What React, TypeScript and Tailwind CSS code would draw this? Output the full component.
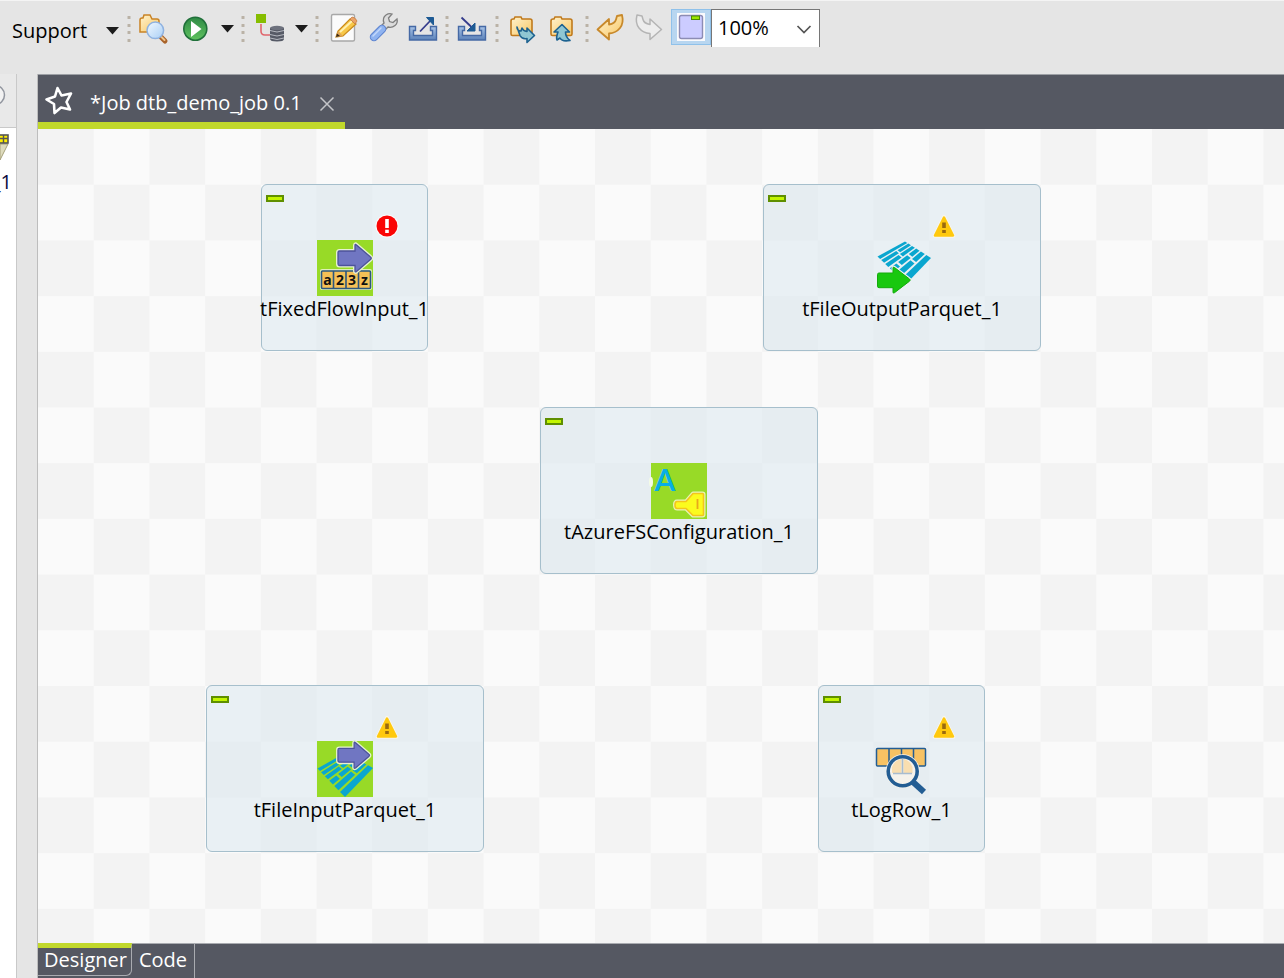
import type { ReactNode } from "react"

type Status = "error" | "warning" | "none"

type JobNode = {
  name: string
  position: string
  status: Status
  icon: ReactNode
}

type Point = [number, number]

function ToolIcon({ children }: { children: ReactNode }) {
  return (
    <svg viewBox="0 0 40 40" className="w-10 h-10" aria-hidden="true">
      {children}
    </svg>
  )
}

function ToolButton({ label, children }: { label: string; children: ReactNode }) {
  return (
    <button type="button" aria-label={label} className="w-10 h-10 shrink-0">
      <ToolIcon>{children}</ToolIcon>
    </button>
  )
}

function MenuButton({ label }: { label: string }) {
  return (
    <button type="button" aria-label={label} className="w-6 h-10 shrink-0">
      <svg viewBox="0 0 24 40" className="w-6 h-10" aria-hidden="true">
        <path d="M7 16h13l-6.500 7.500z" fill="#1c1c1c" />
      </svg>
    </button>
  )
}

function Separator() {
  return (
    <svg viewBox="0 0 8 40" className="w-2 h-10 shrink-0" aria-hidden="true">
      {[7, 15, 22, 30].map((y) => (
        <rect key={y} x="2.500" y={y} width="3" height="3" rx="0.500" fill="#bab2a6" />
      ))}
    </svg>
  )
}

function Folder() {
  return (
    <path
      d="M9 12q0-2 2-2h1l1-2h6l1 2h8q2 0 2 2v13q0 1.500-1.500 1.500h-18q-1.500 0-1.500-1.500z"
      fill="url(#folder)"
      stroke="#c07a1c"
      strokeWidth="1.600"
    />
  )
}

function Gradients() {
  return (
    <svg width="0" height="0" className="absolute" aria-hidden="true">
      <defs>
        <linearGradient id="folder" x1="0" y1="0" x2="1" y2="1">
          <stop offset="0" stopColor="#fff3cf" />
          <stop offset="1" stopColor="#f8c765" />
        </linearGradient>
        <linearGradient id="lens" x1="0" y1="0" x2="1" y2="1">
          <stop offset="0" stopColor="#f2f9ff" />
          <stop offset="1" stopColor="#a9cff6" />
        </linearGradient>
        <linearGradient id="run" x1="0" y1="0" x2="0" y2="1">
          <stop offset="0" stopColor="#2f8a45" />
          <stop offset="1" stopColor="#5fc25f" />
        </linearGradient>
        <linearGradient id="tray" x1="0" y1="0" x2="0" y2="1">
          <stop offset="0" stopColor="#a9c4e6" />
          <stop offset="1" stopColor="#5b82ba" />
        </linearGradient>
      </defs>
    </svg>
  )
}

function Toolbar() {
  return (
    <header className="flex items-start h-[74px] pt-2 shrink-0 border-t border-[#f4f4f4] bg-[#e5e5e5]">
      <button type="button" className="flex items-center justify-between w-[125px] h-11 pl-3 pr-1.5 shrink-0 text-xl text-black">
        Support
        <svg viewBox="0 0 13 8" className="w-[13px] h-2" aria-hidden="true">
          <path d="M0 0h13l-6.500 7.500z" fill="#1c1c1c" />
        </svg>
      </button>
      <Separator />

      <div className="flex px-px">
        <ToolButton label="Search">
          <path d="M6 11q0-2 2-2h1l1-3h6l2 4h5q2 0 2 2v11h-19z" fill="url(#folder)" stroke="#c98325" strokeWidth="1.500" />
          <path d="M27 28l4 4" stroke="#a9632a" strokeWidth="5" strokeLinecap="round" />
          <path d="M27.500 28l3 3" stroke="#f0c38a" strokeWidth="2" strokeLinecap="round" />
          <circle cx="21.300" cy="21.300" r="8.300" fill="url(#lens)" stroke="#8fb2e0" strokeWidth="1.500" />
        </ToolButton>
        <ToolButton label="Run">
          <circle cx="21.300" cy="19.700" r="11.500" fill="url(#run)" stroke="#20703a" strokeWidth="1.600" />
          <path d="M17 12l10.500 8L17 28z" fill="#fff" />
        </ToolButton>
        <MenuButton label="Run menu" />
      </div>
      <Separator />

      <div className="flex px-px">
        <ToolButton label="Metadata">
          <path d="M13 15v7q0 4 4 4h6" fill="none" stroke="#e0666c" strokeWidth="1.600" />
          <rect x="8" y="5" width="10" height="9" fill="#86bd00" />
          <path d="M22 19v11q0 2.500 7 2.500t7-2.500V19z" fill="#565a66" />
          <ellipse cx="29" cy="19" rx="7" ry="2.200" fill="#6d717d" />
          <path d="M22 21.500q7 3 14 0M22 25.500q7 3 14 0M22 29q7 3 14 0" fill="none" stroke="#b5b8c0" strokeWidth="1" />
        </ToolButton>
        <MenuButton label="Metadata menu" />
      </div>
      <Separator />

      <div className="flex px-px">
        <ToolButton label="Edit">
          <rect x="9.500" y="5.500" width="23" height="26.500" rx="1.500" fill="#fbfbfb" stroke="#a8a8a8" strokeWidth="1.400" />
          <path d="M14 28l2-6 12-12 6 5-13 12z" fill="#f7c748" stroke="#c98a1b" strokeWidth="1.200" />
          <path d="M18 23l12-11" stroke="#fff0b0" strokeWidth="2" />
          <path d="M28 10l2-2q3 0 5 4l-2 3z" fill="#eaa468" stroke="#c77c42" strokeWidth="0.800" />
          <path d="M14 28l2-6 5 5z" fill="#e0a556" />
          <path d="M14 28l1-3.500 3 2.500z" fill="#3a2a18" />
        </ToolButton>
        <ToolButton label="Preferences">
          <path
            d="M18 18l4-4q-2-5 2-8 3-2 6-1l-3.500 4 1 3.500 3.500 1 4-3.500q1 4-2 6.500-3 2.500-7 1.500l-4 4z"
            fill="#dcdcdc"
            stroke="#7f7f7f"
            strokeWidth="1.300"
          />
          <path d="M12 28l8-8" stroke="#5d83cf" strokeWidth="8.500" strokeLinecap="round" />
          <path d="M12 28l8-8" stroke="#8fb3f0" strokeWidth="6.500" strokeLinecap="round" />
          <path d="M11 27l8-8" stroke="#c3d8fb" strokeWidth="1.500" strokeLinecap="round" />
        </ToolButton>
        <ToolButton label="Export items">
          <path d="M7.500 17.500h6v4h-2v5h19v-5h-2v-4h6v13.500h-27z" fill="url(#tray)" stroke="#4569a5" strokeWidth="1.400" />
          <path d="M18 22.500L29 11" stroke="#353c8c" strokeWidth="1.800" />
          <path d="M24.500 8.500h7v7.500z" fill="#1d5a94" stroke="#1d5a94" />
        </ToolButton>
      </div>
      <Separator />

      <div className="flex px-px">
        <ToolButton label="Import items">
          <path d="M6.500 17.500h6v4h-2v5h19v-5h-2v-4h6v13.500h-27z" fill="url(#tray)" stroke="#4569a5" strokeWidth="1.400" />
          <path d="M9.500 8.500L20 18.500" stroke="#353c8c" strokeWidth="1.800" />
          <path d="M23 14v8h-8z" fill="#1d5a94" stroke="#1d5a94" />
        </ToolButton>
      </div>
      <Separator />

      <div className="flex px-px">
        <ToolButton label="Export project">
          <Folder />
          <path
            d="M15 18q0 4 4 4l1-3q1 3 5 3.500V19l7.500 7.500-7.500 7v-4q-5 1-7-3z"
            fill="#8fc6d2"
            stroke="#1d6290"
            strokeWidth="1.600"
            strokeLinejoin="round"
          />
        </ToolButton>
        <ToolButton label="Import project">
          <Folder />
          <path
            d="M20 15.500l7.500 7.500h-4q0 5 4.500 8.500-8 1.500-10-2.500l-3 2q-1-3 1-8h-4z"
            fill="#8fc6d2"
            stroke="#1d6290"
            strokeWidth="1.600"
            strokeLinejoin="round"
          />
        </ToolButton>
      </div>
      <Separator />

      <div className="flex">
        <ToolButton label="Undo">
          <path
            d="M6.500 20.500L18 10v5.500q6-1 7-5l1-3.500 5-1q2 8-2 13-4 5-11 5.500v6z"
            fill="url(#folder)"
            stroke="#c8892b"
            strokeWidth="1.800"
            strokeLinejoin="round"
          />
        </ToolButton>
        <ToolButton label="Redo">
          <path
            d="M30.500 20.500L19 10v5.500q-6-1-7-5L11 7 6 6q-2 8 2 13 4 5 11 5.500v6z"
            fill="#ededed"
            stroke="#b4b4b4"
            strokeWidth="1.500"
            strokeLinejoin="round"
          />
        </ToolButton>
        <button
          type="button"
          aria-label="Show subjobs"
          aria-pressed="true"
          className="flex items-center justify-center w-10 h-9 shrink-0 border border-[#8fc1ea] bg-[#b8d6f0]"
        >
          <svg viewBox="0 0 28 28" className="w-7 h-7" aria-hidden="true">
            <rect width="28" height="28" fill="#fafafd" />
            <rect x="2.500" y="2.500" width="23" height="23" rx="2" fill="#ccccff" stroke="#8c8cb4" strokeWidth="1.400" />
            <rect x="14.500" y="3" width="8" height="3.500" fill="#9be800" stroke="#4e8a00" />
          </svg>
        </button>
        <div className="relative">
          <select
            aria-label="Zoom"
            className="appearance-none block w-[109px] h-[38px] pl-1.5 pb-0.5 rounded-none border border-b-0 border-[#767676] bg-white text-xl text-black"
          >
            <option>100%</option>
          </select>
          <svg viewBox="0 0 16 9" className="absolute right-2 top-4 w-4 h-[9px] pointer-events-none" aria-hidden="true">
            <path d="M1.500 1l6.500 6.500L14.500 1" fill="none" stroke="#555" strokeWidth="1.700" />
          </svg>
        </div>
      </div>
    </header>
  )
}

function SideView() {
  return (
    <aside className="w-[17px] shrink-0 flex flex-col overflow-hidden border-r border-[#c9c9c9] bg-white">
      <div className="h-[54px] shrink-0 flex items-center pb-3 border-b border-[#c9c9c9] bg-[#e9e9e9]">
        <svg viewBox="0 0 8 24" className="w-2 h-6" aria-hidden="true">
          <circle cx="-5" cy="12" r="9.500" fill="#f2f2f2" stroke="#92969f" strokeWidth="1.500" />
        </svg>
      </div>
      <svg viewBox="0 0 12 30" className="w-3 h-[30px] mt-1.5 shrink-0" aria-hidden="true">
        <path d="M0 10h8L0 26z" fill="#dedbbd" stroke="#a5a07a" />
        <rect x="-6" y="1" width="14" height="8" fill="#ffee00" stroke="#555" strokeWidth="1.600" />
        <path d="M-6 4.500H8M3.500 1v8" stroke="#555" strokeWidth="1.400" />
      </svg>
      <span className="mt-1 w-3 flex justify-end text-xl leading-7 text-[#0b0b3c]">_1</span>
    </aside>
  )
}

function FlowArrow() {
  const d = "M22.500 11h15.500V5.500q0-2 1.500-.5l14 12q1.500 1.200 0 2.500l-14 12q-1.500 1-1.500-.5V25.500H22.500q-1.500 0-1.500-1.500V12.500q0-1.500 1.500-1.500z"
  return (
    <>
      <path d={d} fill="#e6f2d0" stroke="#e6f2d0" strokeWidth="4" />
      <path d={d} fill="#7076c2" stroke="#4c529b" strokeWidth="1.300" />
    </>
  )
}

// Rows get deeper towards the front; planks are start/end pairs along the row.
const plankRows: { from: number; to: number; planks: Point[] }[] = [
  { from: 0, to: 0.09, planks: [[0, 1]] },
  { from: 0.13, to: 0.23, planks: [[0, 0.55], [0.6, 1]] },
  { from: 0.27, to: 0.38, planks: [[0, 0.5], [0.55, 1]] },
  { from: 0.43, to: 0.56, planks: [[0, 0.25], [0.32, 0.66], [0.72, 1]] },
  { from: 0.61, to: 0.76, planks: [[0, 0.6], [0.66, 1]] },
  { from: 0.82, to: 1, planks: [[0, 1]] },
]

function Planks({ left, top, right, bottom }: { left: Point; top: Point; right: Point; bottom: Point }) {
  const at = (s: number, t: number) =>
    [0, 1]
      .map((i) => {
        const start = left[i] + (bottom[i] - left[i]) * t
        const end = top[i] + (right[i] - top[i]) * t
        return (start + (end - start) * s).toFixed(1)
      })
      .join(",")

  return (
    <g fill="#0aa6cf">
      {plankRows.flatMap(({ from, to, planks }) =>
        planks.map(([start, end]) => (
          <polygon key={`${from}-${start}`} points={[at(start, from), at(end, from), at(end, to), at(start, to)].join(" ")} />
        ))
      )}
    </g>
  )
}

function FixedFlowIcon() {
  return (
    <>
      <rect width="56" height="56" fill="#98da27" />
      <rect x="3" y="29" width="52" height="21" rx="2" fill="#dff0b8" />
      <rect x="4.500" y="31" width="49" height="17.500" rx="1" fill="#f6c056" stroke="#2c567f" strokeWidth="1.600" />
      <path d="M16.500 31v17.500M29 31v17.500M41.500 31v17.500" stroke="#2c567f" strokeWidth="1.600" />
      <g fontFamily="'Noto Sans', sans-serif" fontWeight="700" fontSize="14" textAnchor="middle" fill="#111">
        <text x="10.500" y="44.500">a</text>
        <text x="23" y="44.500">2</text>
        <text x="35" y="44.500">3</text>
        <text x="47.500" y="44.500">z</text>
      </g>
      <FlowArrow />
    </>
  )
}

function FileOutputIcon() {
  const arrow = "M5 33h14v-5q0-1.500 1.500-.5l15 11.500q1.500 1 0 2.200l-15 11.500q-1.500 1-1.500-.5v-4.500H5q-1.500 0-1.500-1.500V34.500Q3.500 33 5 33z"
  return (
    <>
      <Planks left={[3.500, 16.500]} top={[31, 1.500]} right={[57, 18]} bottom={[32, 44]} />
      <path d={arrow} fill="#e9f0f4" stroke="#e9f0f4" strokeWidth="3" />
      <path d={arrow} fill="#19c80f" stroke="#14ab0c" strokeWidth="1" />
    </>
  )
}

function FileInputIcon() {
  return (
    <>
      <rect width="56" height="56" fill="#98da27" />
      <Planks left={[0.5, 27.500]} top={[28, 12]} right={[56, 27]} bottom={[28, 56]} />
      <g transform="translate(1 -3) scale(0.950)">
        <FlowArrow />
      </g>
    </>
  )
}

function AzureIcon() {
  const key = "M26 38.500h9l7-8h9.500q1 0 1 1v20q0 1-1 1H42l-7-7h-9q-2 0-2-3.500t2-3.500z"
  return (
    <>
      <rect width="56" height="56" fill="#98da27" />
      <ellipse cx="0" cy="19" rx="2" ry="5" fill="#f4fbe6" />
      <text x="14" y="28" textAnchor="middle" fontFamily="Lato, sans-serif" fontWeight="700" fontSize="30" fill="#08aee6">
        A
      </text>
      <path d={key} fill="#e8f3b4" stroke="#e8f3b4" strokeWidth="4" strokeLinejoin="round" />
      <path d={key} fill="#fbfb1e" stroke="#f3c51c" strokeWidth="1.600" strokeLinejoin="round" />
      <path d="M46.500 36v10" stroke="#e8a81c" strokeWidth="1.800" />
    </>
  )
}

function LogRowIcon() {
  return (
    <>
      <rect x="2.500" y="7.500" width="49" height="17.500" rx="1" fill="#f7c263" stroke="#235d93" strokeWidth="1.500" />
      <path d="M15 7.500V25M27.500 7.500V25M39.500 7.500V25" stroke="#235d93" strokeWidth="1.500" />
      <circle cx="28.700" cy="30.300" r="17" fill="#f5f2ec" />
      <path d="M18 32v-6q3-7 9.500-8v14zM29.500 18q6 1 9 8v6h-9z" fill="#f9deb0" />
      <path d="M28.500 18v14M19 32.500h19" stroke="#a8bccf" strokeWidth="1.600" />
      <path d="M39 41l11 10" stroke="#235d93" strokeWidth="6" />
      <circle cx="28.700" cy="30.300" r="14.500" fill="none" stroke="#235d93" strokeWidth="3.600" />
    </>
  )
}

function StatusBadge({ status }: { status: Status }) {
  if (status === "none") return null
  return (
    <svg viewBox="0 0 24 24" className="absolute left-[58px] -top-[26px] w-6 h-6" role="img" aria-label={status}>
      {status === "error" ? (
        <>
          <circle cx="12" cy="12" r="11.500" fill="#fbfbfb" />
          <circle cx="12" cy="12" r="10.500" fill="#fa0505" />
          <rect x="10.200" y="5" width="3.600" height="9" fill="#fff" />
          <rect x="10.200" y="15.700" width="3.600" height="3.300" fill="#fff" />
        </>
      ) : (
        <>
          <path d="M12 2.500L21.500 22h-19z" fill="#ffc90e" stroke="#f9f6ec" strokeWidth="3.500" strokeLinejoin="round" />
          <path d="M12 3.500L21 21.500H3z" fill="#ffc90e" stroke="#ffc90e" strokeWidth="2.500" strokeLinejoin="round" />
          <rect x="10.200" y="8.500" width="3.600" height="5.500" fill="#9a6a10" />
          <rect x="10.200" y="16" width="3.600" height="3" fill="#9a6a10" />
        </>
      )}
    </svg>
  )
}

const nodes: JobNode[] = [
  { name: "tFixedFlowInput_1", position: "left-[223px] top-[55px] w-[167px]", status: "error", icon: <FixedFlowIcon /> },
  { name: "tFileOutputParquet_1", position: "left-[725px] top-[55px] w-[278px]", status: "warning", icon: <FileOutputIcon /> },
  { name: "tAzureFSConfiguration_1", position: "left-[502px] top-[278px] w-[278px]", status: "none", icon: <AzureIcon /> },
  { name: "tFileInputParquet_1", position: "left-[168px] top-[556px] w-[278px]", status: "warning", icon: <FileInputIcon /> },
  { name: "tLogRow_1", position: "left-[780px] top-[556px] w-[167px]", status: "warning", icon: <LogRowIcon /> },
]

function NodeCard({ node }: { node: JobNode }) {
  return (
    <div
      className={`absolute h-[167px] flex flex-col items-center pt-[55px] rounded-md border border-[#a6bfcc] bg-[#dbe8ef]/55 ${node.position}`}
    >
      <button
        type="button"
        aria-label={`Collapse ${node.name}`}
        className="absolute left-1 top-2.5 w-[18px] h-[7px] border-2 border-[#5f8f00] bg-[#c3f500]"
      />
      <div className="relative shrink-0">
        <svg viewBox="0 0 56 56" className="w-14 h-14 overflow-visible" aria-hidden="true">
          {node.icon}
        </svg>
        <StatusBadge status={node.status} />
      </div>
      <span className="text-xl leading-[26px] whitespace-nowrap text-black">{node.name}</span>
    </div>
  )
}

function Canvas() {
  return (
    <main className="relative flex-1 min-h-0 overflow-hidden bg-[#fafafa]">
      <svg className="absolute inset-0 w-full h-full" aria-hidden="true">
        <defs>
          <pattern id="checker" width="111.400" height="111.400" patternUnits="userSpaceOnUse">
            <rect width="55.700" height="55.700" fill="#f3f3f3" />
            <rect x="55.700" y="55.700" width="55.700" height="55.700" fill="#f3f3f3" />
          </pattern>
        </defs>
        <rect width="100%" height="100%" fill="url(#checker)" />
      </svg>
      {nodes.map((node) => (
        <NodeCard key={node.name} node={node} />
      ))}
    </main>
  )
}

function EditorTabs() {
  return (
    <div className="flex h-[55px] shrink-0 border-t border-[#9da0a5] bg-[#555862]">
      <div className="flex items-center w-[307px] pt-1 pl-1.5 border-b-[7px] border-[#c1d82b] text-white">
        <svg viewBox="0 0 30 30" className="w-[30px] h-[30px] shrink-0" aria-hidden="true">
          <path
            d="M13.500 2l4 7.500 9.500-2-4.500 8.500 3.500 7.500-9-2-6.500 5.500-.5-9-7.500-4.500 8.500-3z"
            fill="none"
            stroke="#fff"
            strokeWidth="2.600"
            strokeLinejoin="round"
          />
        </svg>
        <span className="flex-1 pt-1 pl-4 text-xl whitespace-nowrap">*Job dtb_demo_job 0.1</span>
        <button type="button" aria-label="Close tab" className="pt-1.5 mr-2.5">
          <svg viewBox="0 0 16 16" className="w-4 h-4" aria-hidden="true">
            <path d="M1.500 1.500l13 13M14.500 1.500l-13 13" stroke="#c4c5c8" strokeWidth="1.500" />
          </svg>
        </button>
      </div>
    </div>
  )
}

function ViewTabs() {
  return (
    <div className="flex h-[35px] shrink-0 bg-[#555862] text-xl leading-6 text-white">
      <button type="button" className="w-[94px] h-[33px] pl-0.5 pb-1 border-t-[5px] border-t-[#c1d82b] border-r border-b border-r-[#a9abb0] border-b-[#a9abb0] rounded-br-md">
        Designer
      </button>
      <button type="button" className="w-[63px] pb-0.5 border-t border-r border-[#a9abb0]">
        Code
      </button>
      <div className="flex-1 border-t border-[#a9abb0]" />
    </div>
  )
}

function App() {
  return (
    <div className="h-screen flex flex-col overflow-hidden bg-[#e5e5e5] font-['Open_Sans','Noto_Sans',sans-serif]">
      <Gradients />
      <Toolbar />
      <div className="flex flex-1 min-h-0">
        <SideView />
        <section className="flex flex-col flex-1 min-w-0 ml-5 border-l border-[#bdbdbd]">
          <EditorTabs />
          <Canvas />
          <ViewTabs />
        </section>
      </div>
    </div>
  )
}

export default App
